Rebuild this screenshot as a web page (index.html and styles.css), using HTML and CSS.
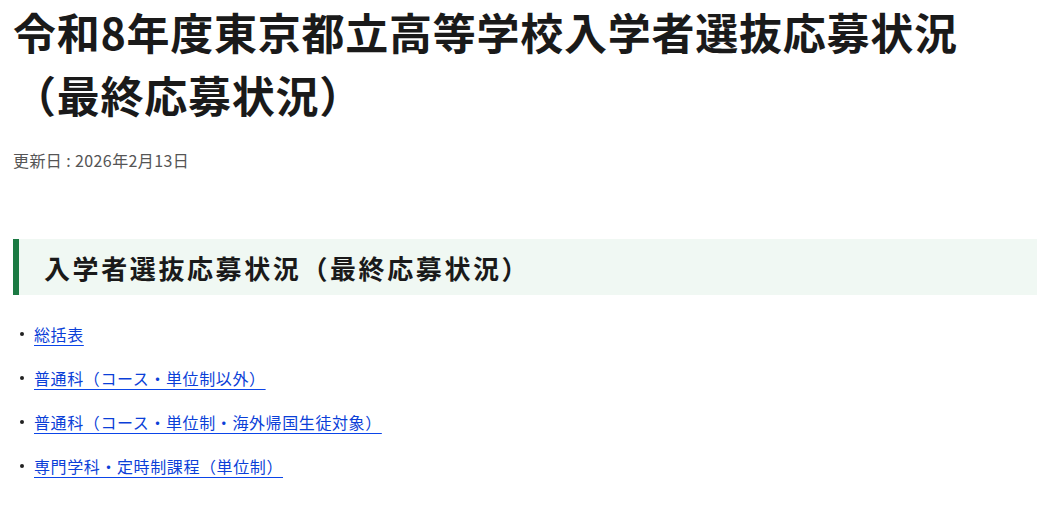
FILE: index.html
```html
<!DOCTYPE html>
<html lang="ja">
<head>
<meta charset="utf-8">
<title>令和8年度東京都立高等学校入学者選抜応募状況（最終応募状況）</title>
<link rel="stylesheet" href="styles.css">
</head>
<body>
<main class="page">
  <h1 class="title">令和8年度東京都立高等学校入学者選抜応募状況（最終応募状況）</h1>
  <p class="updated">更新日 : 2026年2月13日</p>
  <h2 class="section-title">入学者選抜応募状況（最終応募状況）</h2>
  <ul class="links">
    <li><a href="#">総括表</a></li>
    <li><a href="#">普通科（コース・単位制以外）</a></li>
    <li><a href="#">普通科（コース・単位制・海外帰国生徒対象）</a></li>
    <li><a href="#">専門学科・定時制課程（単位制）</a></li>
  </ul>
</main>
</body>
</html>
```
FILE: styles.css
```css
html, body {
  margin: 0;
  padding: 0;
  background: #fff;
}
body {
  font-family: "Noto Sans CJK JP", "Noto Sans", sans-serif;
  color: #1a1a1a;
}
.page {
  padding: 0 13px;
}
.title {
  margin: 0;
  font-size: 43px;
  line-height: 63px;
  font-weight: 700;
  letter-spacing: 0.75px;
  width: 980px;
}
.updated {
  margin: 22px 0 0;
  font-size: 16px;
  line-height: 24px;
  color: #555;
  letter-spacing: 0.4px;
}
.section-title {
  margin: 67px 0 0;
  height: 56px;
  box-sizing: border-box;
  display: flex;
  align-items: center;
  padding-left: 25px;
  border-left: 6px solid #1b7a43;
  background: #f0f8f3;
  font-size: 26px;
  font-weight: 700;
  letter-spacing: 2.6px;
}
.links {
  list-style: none;
  margin: 25px 0 0;
  padding: 0;
}
.links li {
  position: relative;
  padding-left: 21px;
  font-size: 16px;
  line-height: 28px;
  margin-bottom: 16px;
}
.links li::before {
  content: "";
  position: absolute;
  left: 7px;
  top: 12px;
  width: 4px;
  height: 4px;
  border-radius: 50%;
  background: #222;
}
.links a {
  color: #0b3fd8;
  letter-spacing: 0.6px;
  text-decoration: underline;
  text-decoration-color: #0b45e8;
  text-underline-offset: 4px;
}
```
